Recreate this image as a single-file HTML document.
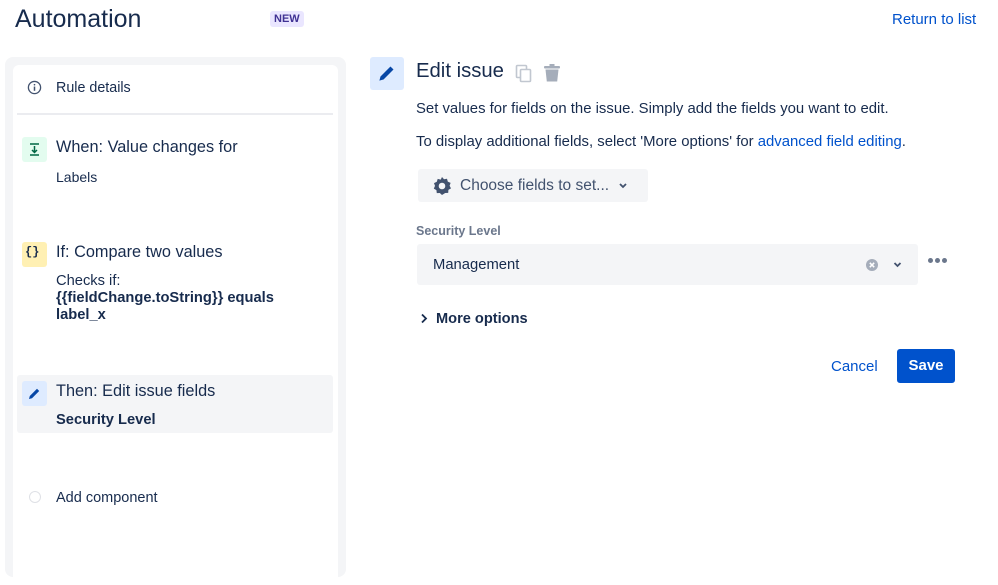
<!DOCTYPE html>
<html><head><style>
*{box-sizing:border-box;margin:0;padding:0}
body{width:998px;height:534px;overflow:hidden;background:#fff;font-family:"Liberation Sans",sans-serif;color:#172b4d;position:relative}
.a{position:absolute;white-space:nowrap}
</style></head><body>
<div class="a" style="left:15px;top:5px;font-size:25px;">Automation</div>
<div class="a" style="left:270px;top:11px;background:#eae6ff;color:#403294;font-size:11px;font-weight:bold;padding:2px 4px;border-radius:3px;">NEW</div>
<div class="a" style="left:892px;top:11px;font-size:15px;color:#0052cc;">Return to list</div>

<div class="a" style="left:5px;top:57px;width:341px;height:520px;background:#f4f5f7;border-radius:8px;"></div>
<div class="a" style="left:13px;top:65px;width:325px;height:520px;background:#fff;border-radius:6px;"></div>
<svg class="a" style="left:27px;top:80px" width="15" height="15" viewBox="0 0 16 16"><circle cx="8" cy="8" r="6.5" fill="none" stroke="#42526e" stroke-width="1.4"/><rect x="7.2" y="7" width="1.6" height="4.5" fill="#42526e"/><circle cx="8" cy="5" r="0.9" fill="#42526e"/></svg>
<div class="a" style="left:56px;top:80px;font-size:14.3px;">Rule details</div>
<div class="a" style="left:17px;top:113px;width:316px;height:2px;background:#ebecf0;"></div>

<div class="a" style="left:22px;top:137px;width:25px;height:25px;background:#e3fcef;border-radius:3px;"></div>
<svg class="a" style="left:27px;top:142px" width="15" height="15" viewBox="0 0 15 15"><path d="M3 2h9M7.5 4v6M5 8l2.5 2.5L10 8M3 13h9" stroke="#006644" stroke-width="1.5" fill="none"/></svg>
<div class="a" style="left:56px;top:138px;font-size:16.3px;">When: Value changes for</div>
<div class="a" style="left:56px;top:169px;font-size:14px;">Labels</div>

<div class="a" style="left:22px;top:242px;width:25px;height:25px;background:#fff0b3;border-radius:3px;"></div>
<div class="a" style="left:25px;top:245px;font-size:12px;font-weight:bold;font-family:'Liberation Mono',monospace;">{}</div>
<div class="a" style="left:56px;top:243px;font-size:16.3px;">If: Compare two values</div>
<div class="a" style="left:56px;top:273px;font-size:14.7px;line-height:17px;">Checks if:<br><b>{{fieldChange.toString}} equals<br>label_x</b></div>

<div class="a" style="left:17px;top:375px;width:316px;height:58px;background:#f4f5f7;border-radius:3px;"></div>
<div class="a" style="left:22px;top:381px;width:25px;height:25px;background:#deebff;border-radius:3px;"></div>
<svg class="a" style="left:28px;top:387px" width="13" height="13" viewBox="0 0 13 13"><path d="M1 12l.8-3L9 1.8l2.2 2.2L4 11.2z" fill="#0747a6"/></svg>
<div class="a" style="left:56px;top:382px;font-size:16.3px;">Then: Edit issue fields</div>
<div class="a" style="left:56px;top:412px;font-size:14.7px;font-weight:bold;">Security Level</div>

<div class="a" style="left:29px;top:491px;width:12px;height:12px;border:1.5px solid #dfe1e6;border-radius:50%;"></div>
<div class="a" style="left:56px;top:490px;font-size:14.5px;">Add component</div>

<div class="a" style="left:370px;top:57px;width:34px;height:33px;background:#deebff;border-radius:3px;"></div>
<svg class="a" style="left:378px;top:64px" width="18" height="18" viewBox="0 0 13 13"><path d="M1 12l.8-3L9 1.8l2.2 2.2L4 11.2z" fill="#0747a6"/></svg>
<div class="a" style="left:416px;top:60px;font-size:20.3px;">Edit issue</div>
<svg class="a" style="left:515px;top:64px" width="18" height="19" viewBox="0 0 18 19"><rect x="1.5" y="1.5" width="10" height="12" rx="1" fill="none" stroke="#c1c7d0" stroke-width="1.6"/><rect x="5.5" y="5.5" width="10" height="12" rx="1" fill="#fff" stroke="#c1c7d0" stroke-width="1.6"/></svg>
<svg class="a" style="left:543px;top:64px" width="18" height="18" viewBox="0 0 18 18"><rect x="1" y="2" width="16" height="2.5" rx="1" fill="#a5adba"/><rect x="6.5" y="0" width="5" height="2.5" fill="#a5adba"/><path d="M2.5 5.5h13l-1.3 12H3.8z" fill="#a5adba"/></svg>
<div class="a" style="left:416px;top:101px;font-size:14.9px;">Set values for fields on the issue. Simply add the fields you want to edit.</div>
<div class="a" style="left:416px;top:134px;font-size:14.9px;">To display additional fields, select 'More options' for <span style="color:#0052cc">advanced field editing</span>.</div>
<div class="a" style="left:418px;top:169px;width:230px;height:33px;background:#f4f5f7;border-radius:3px;"></div>
<svg class="a" style="left:432px;top:176px" width="20" height="20" viewBox="0 0 20 20"><path d="M10 1l2 2.3 3-.6.8 2.9 2.8 1.3-1 2.9 1.4 2.6-2.6 1.5-.2 3-3 .1L10 19l-2.2-2-3 .1-.4-3-2.6-1.5 1.2-2.7-1-2.8 2.8-1.3.9-2.9 3 .7z" fill="#42526e"/><circle cx="10" cy="10" r="3.3" fill="#f4f5f7"/></svg>
<div class="a" style="left:460px;top:177px;font-size:15.5px;color:#42526e;">Choose fields to set...</div>
<svg class="a" style="left:618px;top:182px" width="10" height="8" viewBox="0 0 10 8"><path d="M2 2l3 3 3-3" stroke="#42526e" stroke-width="1.8" fill="none"/></svg>

<div class="a" style="left:416px;top:224px;font-size:12.5px;font-weight:bold;color:#6b778c;">Security Level</div>
<div class="a" style="left:417px;top:244px;width:501px;height:41px;background:#f4f5f7;border-radius:3px;"></div>
<div class="a" style="left:433px;top:257px;font-size:14.8px;">Management</div>
<svg class="a" style="left:865px;top:258px" width="14" height="14" viewBox="0 0 14 14"><circle cx="7" cy="7" r="6" fill="#a5adba"/><path d="M4.8 4.8l4.4 4.4M9.2 4.8l-4.4 4.4" stroke="#fff" stroke-width="1.5"/></svg>
<svg class="a" style="left:892px;top:261px" width="11" height="8" viewBox="0 0 10 8"><path d="M2 2l3 3 3-3" stroke="#42526e" stroke-width="1.8" fill="none"/></svg>
<div class="a" style="left:928px;top:258px;width:5px;height:5px;border-radius:50%;background:#6b778c;box-shadow:7px 0 #6b778c,14px 0 #6b778c;"></div>

<svg class="a" style="left:420px;top:313px" width="8" height="11" viewBox="0 0 8 11"><path d="M2 1.5l4 4-4 4" stroke="#172b4d" stroke-width="1.8" fill="none"/></svg>
<div class="a" style="left:436px;top:311px;font-size:14.6px;font-weight:bold;">More options</div>
<div class="a" style="left:831px;top:358px;font-size:15px;color:#0052cc;">Cancel</div>
<div class="a" style="left:897px;top:349px;width:58px;height:34px;background:#0052cc;border-radius:3px;color:#fff;font-size:15px;font-weight:bold;text-align:center;line-height:34px;">Save</div>
</body></html>
